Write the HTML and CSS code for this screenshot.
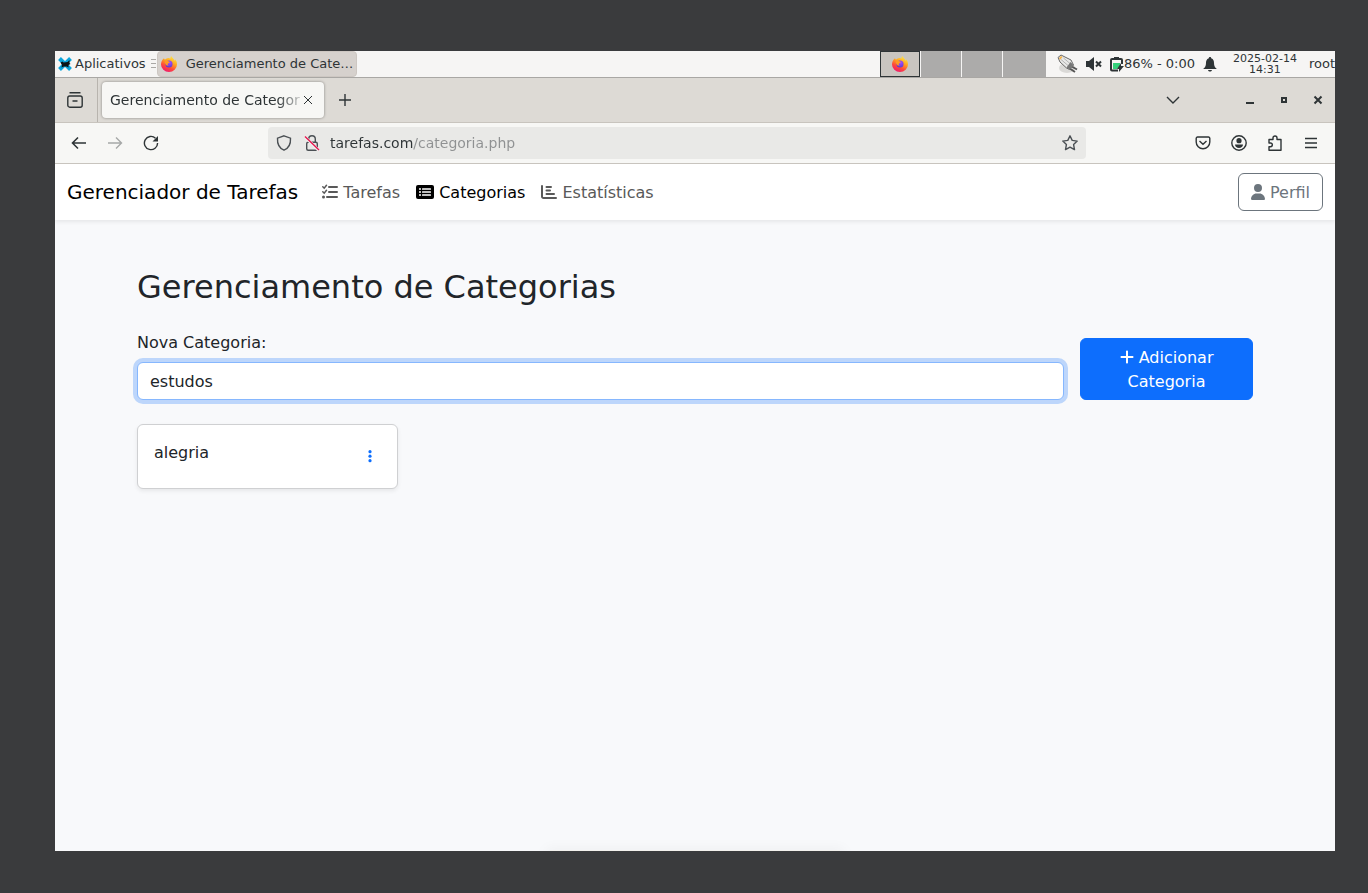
FILE: index.html
```
<!DOCTYPE html>
<html lang="pt-BR">
<head>
<meta charset="utf-8">
<meta name="viewport" content="width=device-width, initial-scale=1">
<title>Gerenciamento de Categorias</title>
<link rel="stylesheet" href="styles.css">
</head>
<body class="desk">
<svg class="defs" aria-hidden="true">
  <defs>
    <linearGradient id="flame" x1="0.8" y1="0" x2="0.3" y2="1">
      <stop offset="0" stop-color="#fff04a"/><stop offset="0.4" stop-color="#ffa51f"/><stop offset="0.7" stop-color="#ff4a3a"/><stop offset="1" stop-color="#ee1670"/>
    </linearGradient>
    <radialGradient id="globe" cx="0.6" cy="0.3" r="0.8">
      <stop offset="0" stop-color="#a84cff"/><stop offset="1" stop-color="#5138c8"/>
    </radialGradient>
    <symbol id="firefox" viewBox="0 0 16 16">
      <path fill="url(#flame)" d="M10.2 0c-.6.9-.9 1.800-.6 2.700C8.700 2 7.400 1.900 6.500 2.200 5.500 2.400 4.500 3 4 3.700 3.500 3.400 3.100 3 3 2.300 1 3.500 0 6.200 0 8.500A8 7.500 0 0 0 16 8.500c0-2.300-.8-4.200-2-5.200.1.700 0 1.200-.2 1.500C13 2.700 11 1.800 10.200 0z"/>
      <circle cx="8" cy="8" r="3.500" fill="url(#globe)"/>
      <path fill="#ff9a22" d="M3.500 5.500c1-.8 2.500-1 3.500-.5.600.3 1 .8 1.800.9-.1 1-1.300 1-1.800 1.500-.5.500-.3 1.600.8 2-1.600.5-2.600-.2-3.200-1.100-.5-.8-.9-1.800-1.100-2.800z"/>
    </symbol>
  </defs>
</svg>
<div class="screen">
  <div class="panel">
    <button class="apps" type="button">
      <svg width="14" height="14" viewBox="0 0 14 14"><path d="M1.500 1.500l11 11M12.500 1.500l-11 11" stroke="#0aa5dc" stroke-width="4"/><path d="M2.500 5.500l2-1 1 1 4-.5 2-2v3l1 1-2 1v2.500l-2-1H6l-2.500 1 .5-2.500z" fill="#0c1417"/></svg>
      <span>Aplicativos</span>
    </button>
    <svg class="grip" width="5" height="10" viewBox="0 0 5 10"><path d="M0 .5h5M0 4.500h5M0 8.500h5" stroke="#aaa8a5"/></svg>
    <button class="task" type="button">
      <svg width="16" height="16"><use href="#firefox"/></svg>
      <span>Gerenciamento de Cate…</span>
    </button>
    <div class="pager">
      <button class="desk-cell active" type="button" aria-label="Área 1"><svg width="16" height="16"><use href="#firefox"/></svg></button>
      <button class="desk-cell" type="button" aria-label="Área 2"></button>
      <button class="desk-cell" type="button" aria-label="Área 3"></button>
      <button class="desk-cell" type="button" aria-label="Área 4"></button>
    </div>
    <div class="tray">
      <svg width="22" height="22" viewBox="0 0 22 22"><ellipse cx="11" cy="15" rx="8" ry="5" fill="#cfcdcb" opacity=".7"/><path d="M14 12.500l7 4M13 15l6 4" stroke="#555" stroke-width="2"/><path d="M2 4.500l3-2.500 10 5 2.500 5-4 4.500-3-1.500L4 9z" fill="#e9e9e8" stroke="#6a6a6a"/><path d="M5 6.500l7 6M7.500 5l6.500 5.500" stroke="#b4b4b4"/><path d="M3 5l2-2 1.500 1L4 7z" fill="#f3b34c"/><path d="M14.500 9l3 3-4 4.500-3-2z" fill="#777"/></svg>
      <svg width="16" height="16" viewBox="0 0 16 16"><path d="M0 5h3l5-4v14l-5-4H0z" fill="#2e3436"/><path d="M10 5.500l5 5M15 5.500l-5 5" stroke="#2e3436" stroke-width="2"/></svg>
      <span class="battery">
        <svg width="14" height="16" viewBox="0 0 14 16"><path d="M8 14.500H2a1 1 0 0 1-1-1V4a1 1 0 0 1 1-1h9a1 1 0 0 1 1 1v4M4 2h5" fill="none" stroke="#2e3436" stroke-width="2"/><path d="M3 7h7v3l-3 3H3z" fill="#33d17a"/><path d="M11 7v3h3l-5 6v-3H7z" fill="#2e3436"/></svg>
        <span>86% - 0:00</span>
      </span>
      <svg width="14" height="16" viewBox="0 0 14 16"><path d="M7 1c.7 0 1.200.5 1.200 1.200C10.500 3 11 5 11 7c0 3 1 4.500 2.500 5.500V13H.5v-.5C2 11.500 3 10 3 7c0-2 .5-4 2.800-4.800C5.800 1.500 6.300 1 7 1zM5 14h4c-.3 1-1 1.500-2 1.500S5.300 15 5 14z" fill="#2e3436"/></svg>
      <time class="clock"><span>2025-02-14</span><span>14:31</span></time>
      <span>root</span>
    </div>
  </div>

  <div class="tabs">
    <button class="tab-view" type="button" aria-label="Visualização">
      <svg class="line" width="16" height="16" viewBox="0 0 16 16"><path d="M2.500.8h11M5.500 9h5"/><rect x=".8" y="4" width="14.400" height="11.200" rx="2"/></svg>
    </button>
    <div class="tab">
      <span class="tab-title">Gerenciamento de Categorias</span>
      <button class="plain" type="button" aria-label="Fechar aba"><svg class="thin" width="8" height="8" viewBox="0 0 8 8"><path d="M0 0l8 8M8 0L0 8"/></svg></button>
    </div>
    <button class="plain new-tab" type="button" aria-label="Nova aba"><svg class="line" width="14" height="14" viewBox="0 0 14 14"><path d="M7 1v12M1 7h12"/></svg></button>
    <div class="window-controls">
      <button class="plain list-tabs" type="button" aria-label="Listar abas"><svg class="line" width="14" height="14" viewBox="0 0 14 14"><path d="M1 4l6 6 6-6"/></svg></button>
      <button class="plain" type="button" aria-label="Minimizar"><svg width="10" height="10" viewBox="0 0 10 10"><path d="M1 8h8" stroke="#2e3436" stroke-width="2"/></svg></button>
      <button class="plain" type="button" aria-label="Restaurar"><svg width="10" height="10" viewBox="0 0 10 10"><rect x="3" y="3" width="4" height="4" fill="none" stroke="#2e3436" stroke-width="2"/></svg></button>
      <button class="plain" type="button" aria-label="Fechar"><svg width="10" height="10" viewBox="0 0 10 10"><path d="M1.500 1.500l7 7M8.500 1.500l-7 7" stroke="#2e3436" stroke-width="2"/></svg></button>
    </div>
  </div>

  <div class="toolbar">
    <div class="history">
      <button class="plain" type="button" aria-label="Voltar"><svg class="bold" width="16" height="16" viewBox="0 0 16 16"><path d="M15 8H1.500M7 2.500L1.500 8 7 13.500"/></svg></button>
      <button class="plain" type="button" aria-label="Avançar" disabled><svg class="line" width="16" height="16" viewBox="0 0 16 16"><path d="M1 8h13.500M9 2.500L14.500 8 9 13.500"/></svg></button>
      <button class="plain" type="button" aria-label="Recarregar"><svg class="line" width="16" height="16" viewBox="0 0 16 16"><path d="M12.500 3.200A6.600 6.600 0 1 0 14.600 8"/><path d="M15 1v5.500H9.500z" fill="#2e3436" stroke="none"/></svg></button>
    </div>
    <div class="address">
      <svg class="line soft" width="16" height="16" viewBox="0 0 16 16"><path d="M8 .8l6.500 2.400c.3 5-1.500 9.800-6.500 12C3 13 1.200 8.200 1.500 3.200z"/></svg>
      <svg class="line soft" width="16" height="16" viewBox="0 0 16 16"><rect x="2.700" y="7.200" width="10.600" height="8" rx="1.500"/><path d="M4.700 7V4a3.300 3.300 0 0 1 6.600 0v3"/><path d="M1 2l14 13.500" stroke="#f0f0ef" stroke-width="3"/><path d="M1 1.500L15 15" stroke="#e8174f"/></svg>
      <input class="url" type="text" aria-label="Endereço" value="tarefas.com/categoria.php">
      <button class="plain" type="button" aria-label="Favoritar"><svg class="line soft" width="16" height="16" viewBox="0 0 16 16"><path stroke-linejoin="round" d="M8 .8l2.200 4.600 5 .7-3.600 3.500.9 5L8 12.200l-4.500 2.400.9-5L.8 6.100l5-.7z"/></svg></button>
    </div>
    <div class="actions">
      <button class="plain" type="button" aria-label="Pocket"><svg class="line" width="16" height="16" viewBox="0 0 16 16"><path d="M2.500 2h11a1.300 1.300 0 0 1 1.300 1.300V7A6.800 6.800 0 0 1 1.200 7V3.300A1.300 1.300 0 0 1 2.500 2zM4.500 6L8 9.300 11.500 6"/></svg></button>
      <button class="plain" type="button" aria-label="Conta"><svg class="line" width="16" height="16" viewBox="0 0 16 16"><circle cx="8" cy="8" r="7.200"/><circle cx="8" cy="5.700" r="2.600" fill="#2e3436" stroke="none"/><path d="M4 9.500h8c0 2-1.800 3.500-4 3.500s-4-1.500-4-3.500z" fill="#2e3436" stroke="none"/></svg></button>
      <button class="plain" type="button" aria-label="Extensões"><svg class="line" width="16" height="16" viewBox="0 0 16 16"><path stroke-linejoin="round" d="M2 8V4.500h4V3a2 2 0 0 1 4 0v1.500h4v10.700H2v-3.500h1.500a1.800 1.800 0 0 0 0-3.700z"/></svg></button>
      <button class="plain" type="button" aria-label="Menu"><svg class="line" width="16" height="16" viewBox="0 0 16 16"><path d="M2 3.500h12M2 8h12M2 12.500h12"/></svg></button>
    </div>
  </div>

  <div class="page">
    <nav class="navbar">
      <a class="brand" href="#">Gerenciador de Tarefas</a>
      <div class="links">
        <a class="link" href="#"><svg width="16" height="16" viewBox="0 0 16 16" fill="none" stroke="currentColor" stroke-width="2" stroke-linecap="round"><path d="M7 3h8M7 8h8M5 13h10"/><path stroke-width="1.500" d="M.8 2.800l1.400 1.400L4.500 1.300M.8 7.800l1.400 1.400 2.300-2.900"/><circle cx="1.500" cy="13" r="1.500" fill="currentColor" stroke="none"/></svg> Tarefas</a>
        <a class="link current" href="#"><svg width="18" height="16" viewBox="0 0 18 16"><rect y="1" width="18" height="14" rx="2" fill="currentColor"/><g fill="#fff"><circle cx="4" cy="5" r="1"/><circle cx="4" cy="8" r="1"/><circle cx="4" cy="11" r="1"/><rect x="6" y="4.300" width="9" height="1.400" rx=".5"/><rect x="6" y="7.300" width="9" height="1.400" rx=".5"/><rect x="6" y="10.300" width="9" height="1.400" rx=".5"/></g></svg> Categorias</a>
        <a class="link" href="#"><svg width="16" height="16" viewBox="0 0 16 16" fill="none" stroke="currentColor" stroke-width="2" stroke-linecap="round"><path d="M1 2v10.500A1.500 1.500 0 0 0 2.500 14H15"/><path d="M5.500 3H10M5.500 6.500H9M5.500 10H13"/></svg> Estatísticas</a>
      </div>
      <a class="btn btn-outline" href="#"><svg width="14" height="16" viewBox="0 0 448 512"><path fill="currentColor" d="M224 256A128 128 0 1 0 224 0a128 128 0 1 0 0 256zm-45.700 48C79.800 304 0 383.800 0 482.300 0 498.700 13.300 512 29.700 512h388.600c16.400 0 29.700-13.300 29.700-29.700C448 383.800 368.200 304 269.700 304z"/></svg> Perfil</a>
    </nav>

    <main class="container">
      <h2 class="title">Gerenciamento de Categorias</h2>
      <form class="form">
        <div class="field">
          <label class="label" for="categoria">Nova Categoria:</label>
          <input class="control" id="categoria" type="text" value="estudos">
        </div>
        <button class="btn btn-primary" type="button"><svg width="14" height="16" viewBox="0 0 448 512"><path fill="currentColor" d="M256 80c0-17.700-14.300-32-32-32s-32 14.300-32 32v144H48c-17.700 0-32 14.300-32 32s14.300 32 32 32h144v144c0 17.700 14.300 32 32 32s32-14.300 32-32V288h144c17.700 0 32-14.300 32-32s-14.300-32-32-32H256z"/></svg> Adicionar Categoria</button>
      </form>
      <div class="cards">
        <article class="card">
          <h5 class="card-title">alegria</h5>
          <button class="more" type="button" aria-label="Opções"><svg width="4" height="14" viewBox="0 0 4 14" fill="currentColor"><circle cx="2" cy="1.700" r="1.600"/><circle cx="2" cy="6.200" r="1.600"/><circle cx="2" cy="10.700" r="1.600"/></svg></button>
        </article>
      </div>
    </main>
  </div>
</div>
</body>
</html>
```

FILE: styles.css
```
*, *::before, *::after { box-sizing: border-box; }

.desk {
  margin: 0;
  min-height: 100vh;
  padding: 51px 33px 42px 55px;
  display: flex;
  background: #3a3b3d;
  font-family: "DejaVu Sans", sans-serif;
  font-size: 16px;
  line-height: 24px;
  color: #212529;
}

.defs { position: absolute; width: 0; height: 0; }

.screen {
  flex: 1;
  min-width: 0;
  display: flex;
  flex-direction: column;
}

button, input { font: inherit; color: inherit; }
a { color: inherit; text-decoration: none; }
svg { flex: none; }

.line, .thin, .bold { fill: none; stroke: #2e3436; stroke-width: 1.4; }
.thin { stroke-width: 1; }
.bold { stroke-width: 1.6; }
.soft { stroke: #4b5054; }

.plain {
  display: flex;
  padding: 0;
  border: 0;
  background: none;
}
.plain:disabled { opacity: 0.4; }

/* Desktop panel */
.panel {
  display: flex;
  align-items: center;
  height: 27px;
  border-bottom: 1px solid #a9a7a4;
  background: #f6f5f4;
  font-size: 13px;
  color: #2e3436;
  white-space: nowrap;
}
.apps {
  display: flex;
  align-items: center;
  gap: 3px;
  padding: 0 5px 0 3px;
  border: 0;
  background: none;
}
.grip { margin-right: 1px; }
.task {
  display: flex;
  align-items: center;
  gap: 9px;
  width: 200px;
  height: 26px;
  padding: 0 3px;
  border: 1px solid #cdc7c2;
  border-radius: 4px;
  background: #d6d1cd;
}
.pager {
  display: flex;
  gap: 1px;
  height: 26px;
  margin-left: auto;
}
.desk-cell {
  display: flex;
  align-items: center;
  justify-content: center;
  width: 40px;
  padding: 0;
  border: 0;
  background: #acabaa;
}
.desk-cell:last-child { width: 43px; }
.desk-cell.active { border: 1px solid #2e3436; background: #c9c5c0; }
.tray {
  display: flex;
  align-items: center;
  gap: 8px;
  padding-left: 10px;
}
.battery { display: flex; align-items: center; }
.clock {
  display: flex;
  flex-direction: column;
  align-items: center;
  margin: 0 4px 0 8px;
  font-size: 11px;
  line-height: 11px;
}

/* Browser tabs */
.tabs {
  display: flex;
  align-items: center;
  height: 45px;
  border-bottom: 1px solid #c8c4be;
  background: #dddad5;
}
.tab-view {
  display: flex;
  align-items: center;
  justify-content: center;
  align-self: stretch;
  width: 43px;
  padding: 0 2px 0 0;
  border: 0;
  border-right: 1px solid #b8b4ae;
  background: none;
}
.tab {
  display: flex;
  align-items: center;
  gap: 3px;
  width: 222px;
  height: 36px;
  margin-left: 4px;
  padding: 0 12px 0 8px;
  border-radius: 4px;
  background: #f7f7f5;
  box-shadow: 0 0 3px rgba(0, 0, 0, 0.4);
  font-size: 14px;
  color: #2e3436;
}
.tab-title {
  flex: 1;
  min-width: 0;
  overflow: hidden;
  white-space: nowrap;
  mask-image: linear-gradient(to left, rgba(0, 0, 0, 0.2), #000 24px);
}
.new-tab { margin-left: 14px; }
.window-controls {
  display: flex;
  align-items: center;
  gap: 24px;
  margin-left: auto;
  padding-right: 12px;
}
.list-tabs { margin-right: 41px; }

/* Browser toolbar */
.toolbar {
  display: flex;
  align-items: center;
  height: 41px;
  border-bottom: 1px solid #c8c4be;
  background: #f7f7f5;
}
.history, .actions { display: flex; gap: 20px; padding: 0 16px; }
.address {
  flex: 1;
  display: flex;
  align-items: center;
  gap: 12px;
  max-width: 818px;
  height: 32px;
  margin-left: 93px;
  padding: 0 8px;
  border-radius: 4px;
  background: #e9e9e7;
}
.url {
  flex: 1;
  min-width: 0;
  margin-left: -2px;
  padding: 0;
  border: 0;
  outline: 0;
  font-size: 14px;
  color: transparent;
  background: linear-gradient(to right, #2e3436 83px, #8f9192 83px);
  background-clip: text;
}
.actions { margin-left: auto; }

/* Page */
.page {
  flex: 1;
  display: flex;
  flex-direction: column;
  overflow: hidden;
  background: #f8f9fb;
}
.page::after {
  content: "";
  align-self: center;
  width: 290px;
  height: 1px;
  margin-top: auto;
  background: #f3f1ed;
  box-shadow: 0 4px 14px 4px rgba(0, 0, 0, 0.06);
}
.navbar {
  display: flex;
  align-items: center;
  gap: 16px;
  min-height: 56px;
  padding: 8px 12px;
  background: #fff;
  box-shadow: 0 2px 4px rgba(0, 0, 0, 0.075);
}
.brand { font-size: 20px; line-height: 30px; color: #000; white-space: nowrap; }
.links { flex: 1; display: flex; }
.link { padding: 9px 8px 7px; color: #595959; white-space: nowrap; }
.link svg, .btn svg { vertical-align: -2px; }
.current { color: #000; }

.btn {
  padding: 7px 12px 5px;
  border: 1px solid;
  border-radius: 6px;
  text-align: center;
}
.btn-outline { border-color: #6c757d; color: #6c757d; }
.btn-primary { border-color: #0d6efd; background: #0d6efd; color: #fff; }

.container {
  width: 100%;
  max-width: 1140px;
  margin: 0 auto;
  padding: 48px 12px 0;
}
.title {
  margin: 0 0 24px;
  font-size: 32px;
  line-height: 38px;
  font-weight: 400;
}
.form {
  display: grid;
  grid-template-columns: minmax(0, 1fr) 173px;
  gap: 16px;
  align-items: end;
  margin-bottom: 24px;
}
.field { display: grid; gap: 6px; }
.label { line-height: 26px; }
.control {
  width: 100%;
  height: 38px;
  padding: 6px 12px;
  border: 1px solid #86b7fe;
  border-radius: 6px;
  outline: 0;
  background: #fff;
  box-shadow: 0 0 0 4px rgba(13, 110, 253, 0.25);
}
.cards {
  display: grid;
  grid-template-columns: repeat(4, minmax(0, 1fr));
  gap: 24px;
}
.card {
  display: flex;
  align-items: center;
  justify-content: space-between;
  padding: 16px;
  border: 1px solid #cfd0d2;
  border-radius: 6px;
  background: #fff;
  box-shadow: 0 2px 4px rgba(0, 0, 0, 0.075);
}
.card-title {
  margin: 0 0 8px;
  font-size: 16px;
  line-height: 19px;
  font-weight: 400;
}
.more {
  display: flex;
  align-items: center;
  height: 31px;
  padding: 0 9px;
  border: 0;
  background: none;
  color: #0d6efd;
}
```
